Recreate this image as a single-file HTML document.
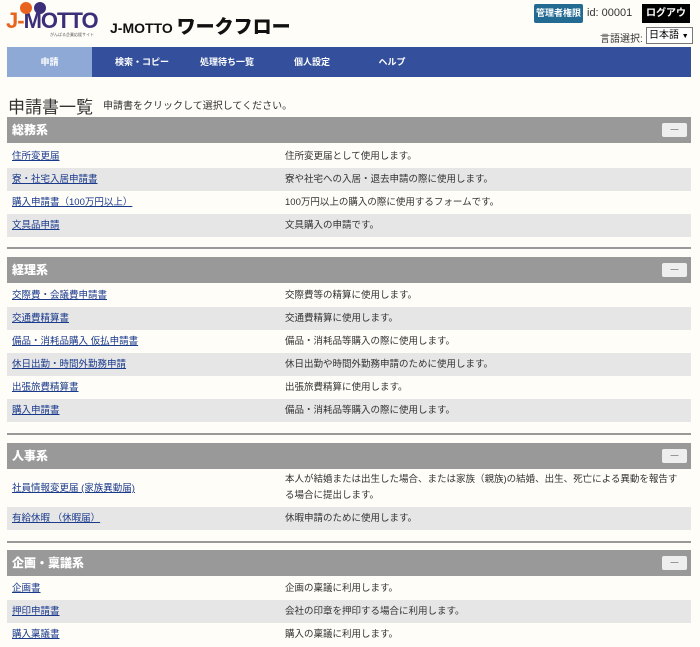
<!DOCTYPE html><html><head><meta charset="utf-8"><style>
body{margin:0;width:700px;height:647px;background:#fffdf8;font-family:"Liberation Sans","Noto Sans CJK JP",sans-serif;position:relative;overflow:hidden}
.a{position:absolute}
.nav{left:7px;top:47px;width:684px;height:30px;background:#34509c}
.nav span{position:absolute;top:0;height:30px;line-height:30px;color:#fff;font-size:9px;font-weight:bold;text-align:center}
.hd{left:7px;width:684px;height:26px;background:#999;color:#fff;font-weight:bold;font-size:12px;line-height:26px}
.hd b{position:absolute;left:5px}
.hd i{position:absolute;right:4px;top:6px;width:25px;height:14px;background:#eee;border-radius:2px;color:#888;font-style:normal;font-size:8px;line-height:14px;text-align:center}
.r{left:7px;width:684px;height:23px;font-size:9.5px;line-height:23px;color:#333}
.r.g{background:#e6e6e6}
.r a{position:absolute;left:5px;color:#1a3a8c;text-decoration:underline}
.r span{position:absolute;left:278px}
.ln{left:7px;width:684px;height:2px;background:#999}
</style></head><body>
<div class="a" style="left:6px;top:8px;font-size:22px;font-weight:900;color:#e8641e;letter-spacing:-1px">J-<span style="color:#3b2f7a">M</span><span style="color:#3b2f7a">OTTO</span></div>
<div class="a" style="left:20px;top:2px;width:12px;height:12px;border-radius:6px;background:#e8641e"></div>
<div class="a" style="left:34px;top:2px;width:12px;height:12px;border-radius:6px;background:#3b2f7a"></div>
<div class="a" style="left:50px;top:32px;font-size:4px;color:#555">がんばる企業応援サイト</div>
<div class="a" style="left:110px;top:12px;font-size:14px;font-weight:900;color:#111">J-MOTTO <span style="font-size:19px">ワークフロー</span></div>
<div class="a" style="left:534px;top:4px;width:49px;height:19px;background:#236b93;border-radius:2px;color:#fff;font-size:9px;font-weight:bold;line-height:19px;text-align:center">管理者権限</div>
<div class="a" style="left:587px;top:7px;font-size:11px;color:#333">id: 00001</div>
<div class="a" style="left:642px;top:4px;width:48px;height:19px;background:#000;color:#fff;font-size:10px;font-weight:bold;line-height:19px;text-align:center;overflow:hidden">ログアウト</div>
<div class="a" style="left:600px;top:30px;font-size:10px;color:#333">言語選択:</div>
<div class="a" style="left:646px;top:27px;width:43px;height:15px;border:1px solid #777;background:#fff;font-size:10px;line-height:15px;padding-left:2px;box-sizing:content-box">日本語 <span style="font-size:7px">▼</span></div>
<div class="a nav"><span style="left:0;width:85px;background:#8fa9d6">申請</span><span style="left:95px;width:80px">検索・コピー</span><span style="left:180px;width:80px">処理待ち一覧</span><span style="left:265px;width:80px">個人設定</span><span style="left:345px;width:80px">ヘルプ</span></div>
<div class="a" style="left:8px;top:93px;font-size:17px;color:#333">申請書一覧</div>
<div class="a" style="left:103px;top:97px;font-size:10px;color:#333">申請書をクリックして選択してください。</div>

<div class="a hd" style="top:117px"><b>総務系</b><i>—</i></div>
<div class="a r" style="top:145px"><a>住所変更届</a><span>住所変更届として使用します。</span></div>
<div class="a r g" style="top:168px"><a>寮・社宅入居申請書</a><span>寮や社宅への入居・退去申請の際に使用します。</span></div>
<div class="a r" style="top:191px"><a>購入申請書（100万円以上）</a><span>100万円以上の購入の際に使用するフォームです。</span></div>
<div class="a r g" style="top:214px"><a>文具品申請</a><span>文具購入の申請です。</span></div>
<div class="a ln" style="top:247px"></div>

<div class="a hd" style="top:257px"><b>経理系</b><i>—</i></div>
<div class="a r" style="top:284px"><a>交際費・会議費申請書</a><span>交際費等の精算に使用します。</span></div>
<div class="a r g" style="top:307px"><a>交通費精算書</a><span>交通費精算に使用します。</span></div>
<div class="a r" style="top:330px"><a>備品・消耗品購入 仮払申請書</a><span>備品・消耗品等購入の際に使用します。</span></div>
<div class="a r g" style="top:353px"><a>休日出勤・時間外勤務申請</a><span>休日出勤や時間外勤務申請のために使用します。</span></div>
<div class="a r" style="top:376px"><a>出張旅費精算書</a><span>出張旅費精算に使用します。</span></div>
<div class="a r g" style="top:399px"><a>購入申請書</a><span>備品・消耗品等購入の際に使用します。</span></div>
<div class="a ln" style="top:433px"></div>

<div class="a hd" style="top:443px"><b>人事系</b><i>—</i></div>
<div class="a r" style="top:470px;height:37px"><a style="top:7px">社員情報変更届 (家族異動届)</a><span style="top:2px;line-height:16px;width:400px">本人が結婚または出生した場合、または家族（親族)の結婚、出生、死亡による異動を報告する場合に提出します。</span></div>
<div class="a r g" style="top:507px"><a>有給休暇 （休暇届）</a><span>休暇申請のために使用します。</span></div>
<div class="a ln" style="top:541px"></div>

<div class="a hd" style="top:550px"><b>企画・稟議系</b><i>—</i></div>
<div class="a r" style="top:577px"><a>企画書</a><span>企画の稟議に利用します。</span></div>
<div class="a r g" style="top:600px"><a>押印申請書</a><span>会社の印章を押印する場合に利用します。</span></div>
<div class="a r" style="top:623px"><a>購入稟議書</a><span>購入の稟議に利用します。</span></div>
</body></html>
